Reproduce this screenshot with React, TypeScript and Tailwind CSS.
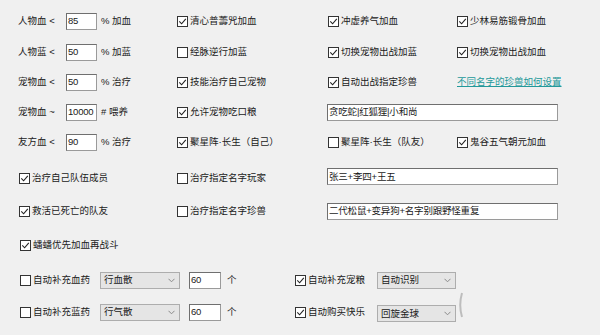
import React from "react";

const font = "font-['Liberation_Sans','Noto_Sans_CJK_SC',sans-serif]";

function Box({ checked }: { checked: boolean }) {
  return (
    <div className="w-[11px] h-[11px] border border-[#333] bg-white shrink-0 flex items-center justify-center">
      {checked && (
        <svg width="9" height="9" viewBox="0 0 9 9">
          <path d="M1.3 4.4 L3.6 6.8 L7.8 1.8" fill="none" stroke="#222" strokeWidth="1.1" />
        </svg>
      )}
    </div>
  );
}

function Check({ checked, label, w }: { checked: boolean; label: string; w?: string }) {
  return (
    <div className={`flex items-center gap-[2px] shrink-0 ${w ?? ""}`}>
      <Box checked={checked} />
      <span className="whitespace-nowrap">{label}</span>
    </div>
  );
}

function Input({ value, w = "w-[31px]" }: { value: string; w?: string }) {
  return (
    <div
      className={`${w} h-[17px] bg-white border border-[#9a9a9a] border-t-[#6f6f6f] border-l-[#6f6f6f] flex items-center pl-[1px] text-[9.5px] tracking-[-0.2px] leading-none shrink-0 overflow-hidden whitespace-nowrap`}
    >
      {value}
    </div>
  );
}

function Select({ value, w = "w-[80px]" }: { value: string; w?: string }) {
  return (
    <div
      className={`${w} h-[17px] bg-[#e5e5e5] border border-[#adadad] flex items-center justify-between pl-[3px] pr-[4px] shrink-0`}
    >
      <span>{value}</span>
      <svg width="7" height="5" viewBox="0 0 7 5">
        <path d="M0.5 0.8 L3.5 3.8 L6.5 0.8" fill="none" stroke="#8a8a8a" strokeWidth="1" />
      </svg>
    </div>
  );
}

function LeftRow({ label, value, unit }: { label: string; value: string; unit: string }) {
  return (
    <div className="flex items-center w-[159px] shrink-0">
      <span className="w-[48px] whitespace-nowrap">{label}</span>
      <Input value={value} />
      <span className="ml-[4px] whitespace-nowrap">{unit}</span>
    </div>
  );
}

export default function App() {
  return (
    <div className={`w-[600px] h-[335px] bg-[#f0f0f0] text-[#1a1a1a] text-[9.5px] leading-none ${font} flex flex-col pl-[18px] pt-[11px] overflow-hidden`}>
      {/* Row 1 */}
      <div className="flex items-center h-[20px]">
        <LeftRow label="人物血 <" value="85" unit="% 加血" />
        <Check checked label="清心普薵咒加血" w="w-[151px]" />
        <Check checked label="冲虚养气加血" w="w-[129px]" />
        <Check checked label="少林易筋锻骨加血" />
      </div>
      {/* Row 2 */}
      <div className="flex items-center h-[20px] mt-[11px]">
        <LeftRow label="人物蓝 <" value="50" unit="% 加蓝" />
        <Check checked={false} label="经脉逆行加蓝" w="w-[151px]" />
        <Check checked label="切换宠物出战加蓝" w="w-[129px]" />
        <Check checked label="切换宠物出战加血" />
      </div>
      {/* Row 3 */}
      <div className="flex items-center h-[20px] mt-[10px]">
        <LeftRow label="宠物血 <" value="50" unit="% 治疗" />
        <Check checked label="技能治疗自己宠物" w="w-[151px]" />
        <Check checked label="自动出战指定珍兽" w="w-[129px]" />
        <span className="text-[#23999a] underline whitespace-nowrap">不同名字的珍兽如何设置</span>
      </div>
      {/* Row 4 */}
      <div className="flex items-center h-[20px] mt-[10px]">
        <LeftRow label="宠物血 ~" value="10000" unit="# 喂养" />
        <Check checked label="允许宠物吃口粮" w="w-[150px]" />
        <Input value="贪吃蛇|红狐狸|小和尚" w="w-[231px]" />
      </div>
      {/* Row 5 */}
      <div className="flex items-center h-[20px] mt-[10px]">
        <LeftRow label="友方血 <" value="90" unit="% 治疗" />
        <Check checked label="聚星阵·长生（自己）" w="w-[151px]" />
        <Check checked={false} label="聚星阵·长生（队友）" w="w-[129px]" />
        <Check checked label="鬼谷五气朝元加血" />
      </div>
      {/* Row 6 */}
      <div className="flex items-center h-[20px] mt-[16px]">
        <div className="w-[159px] shrink-0 pl-[1px]">
          <Check checked label="治疗自己队伍成员" />
        </div>
        <Check checked={false} label="治疗指定名字玩家" w="w-[150px]" />
        <div className="-mt-[3px]">
          <Input value="张三+李四+王五" w="w-[231px]" />
        </div>
      </div>
      {/* Row 7 */}
      <div className="flex items-center h-[20px] mt-[13px]">
        <div className="w-[159px] shrink-0 pl-[1px]">
          <Check checked label="救活已死亡的队友" />
        </div>
        <Check checked={false} label="治疗指定名字珍兽" w="w-[150px]" />
        <Input value="二代松鼠+变异狗+名字别跟野怪重复" w="w-[231px]" />
      </div>
      {/* Row 8 */}
      <div className="flex items-center h-[20px] mt-[14px] pl-[2px]">
        <Check checked label="蟠蟠优先加血再战斗" />
      </div>
      {/* Row 9 */}
      <div className="flex items-center h-[20px] mt-[15px] pl-[2px]">
        <Check checked={false} label="自动补充血药" w="w-[80px]" />
        <Select value="行血散" />
        <div className="ml-[9px]">
          <Input value="60" w="w-[32px]" />
        </div>
        <span className="ml-[6px] w-[68px]">个</span>
        <Check checked label="自动补充宠粮" w="w-[82px]" />
        <Select value="自动识别" w="w-[79px]" />
      </div>
      {/* Row 10 */}
      <div className="flex items-center h-[20px] mt-[12px] pl-[2px]">
        <Check checked={false} label="自动补充蓝药" w="w-[80px]" />
        <Select value="行气散" />
        <div className="ml-[9px]">
          <Input value="60" w="w-[32px]" />
        </div>
        <span className="ml-[6px] w-[68px]">个</span>
        <Check checked label="自动购买快乐" w="w-[82px]" />
        <div className="mt-[3px]">
          <Select value="回旋金球" w="w-[79px]" />
        </div>
        <svg width="5" height="20" viewBox="0 0 5 20" className="ml-[2px] overflow-visible">
          <path d="M4 -9 Q0.5 3 4 15" fill="none" stroke="#bdbdbd" strokeWidth="2" />
        </svg>
      </div>
    </div>
  );
}
